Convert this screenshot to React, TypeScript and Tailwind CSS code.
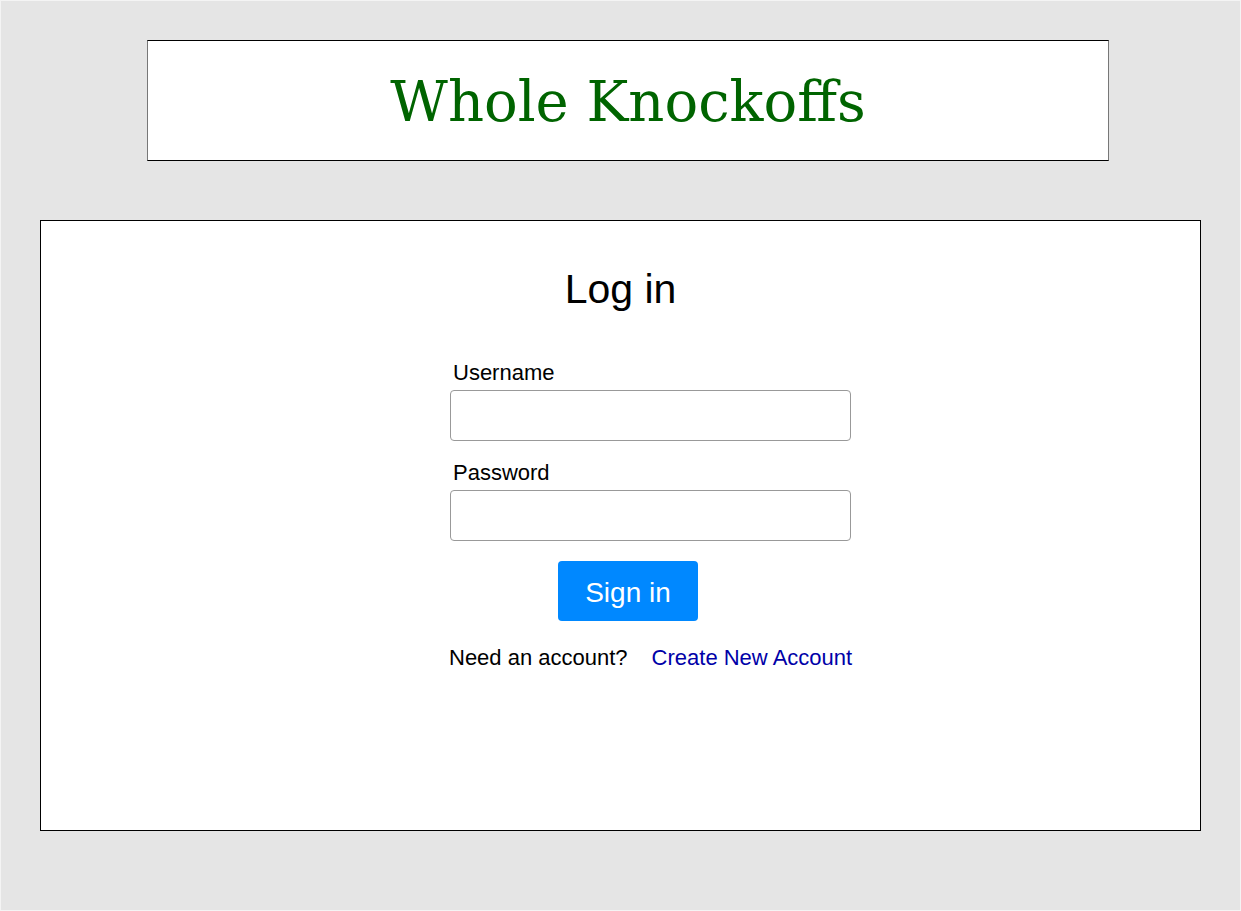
export default function App() {
  return (
    <div className="h-[911px] w-[1241px] border border-[#f4f4f4] bg-[#e5e5e5] pt-[39px] font-['Liberation_Sans',Arial,sans-serif]">
      <header className="ml-[146px] flex h-[121px] w-[962px] items-start justify-center border border-x-[#777] border-y-black bg-white">
        <h1 className="mt-[33px] font-['DejaVu_Serif',serif] text-[56px] leading-none text-[#006400]">
          Whole Knockoffs
        </h1>
      </header>

      <main className="ml-[39px] mt-[59px] h-[611px] w-[1161px] border border-black bg-white">
        <h2 className="mt-[48px] text-center text-[41px] leading-none text-black">Log in</h2>

        <form className="ml-[409px] mt-[52px] w-[401px]" onSubmit={(e) => e.preventDefault()}>
          <label className="block pl-[3px] text-[22px] leading-none text-black">Username</label>
          <input
            type="text"
            className="mt-[6px] block h-[51px] w-[401px] rounded-[4px] border border-[#999] bg-white px-2 text-[20px] outline-none"
          />
          <label className="mt-[21px] block pl-[3px] text-[22px] leading-none text-black">Password</label>
          <input
            type="password"
            className="mt-[6px] block h-[51px] w-[401px] rounded-[4px] border border-[#999] bg-white px-2 text-[20px] outline-none"
          />
          <button
            type="submit"
            className="ml-[108px] mt-[20px] flex h-[60px] w-[140px] items-center justify-center rounded-[4px] bg-[#0088ff] pt-[4px] text-[28px] text-white"
          >
            Sign in
          </button>
        </form>

        <div className="ml-[408px] mt-[26px] flex gap-[24px] text-[22px] leading-none">
          <span className="text-black">Need an account?</span>
          <a href="#" className="text-[#0000a8]">Create New Account</a>
        </div>
      </main>
    </div>
  );
}
